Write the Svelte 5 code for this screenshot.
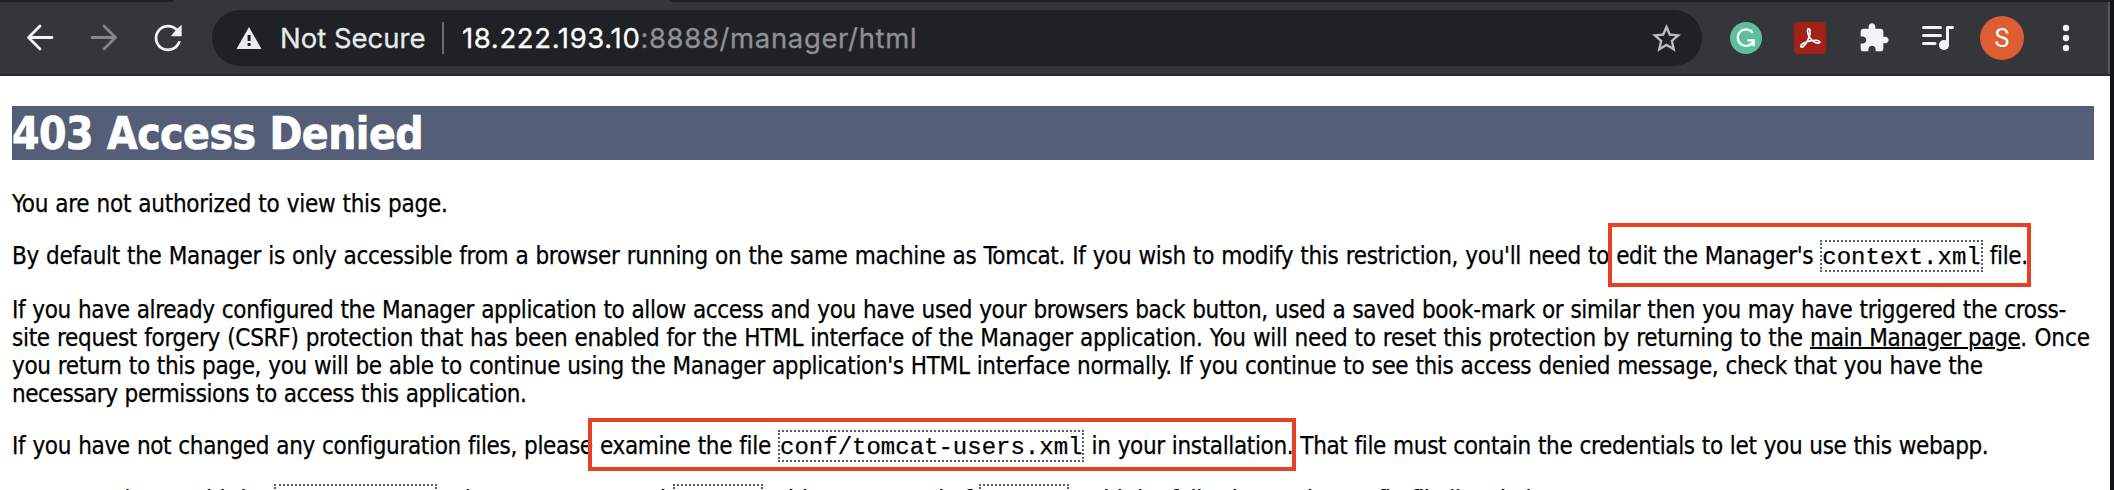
<script>
  // Each line is a list of runs; `t` is the kind of run, `ls` its tracking in px.
  const paragraphs = [
    { lines: [[{ s: 'You are not authorized to view this page.', ls: -0.265 }]] },
    {
      tall: true,
      lines: [[
        { s: "By default the Manager is only accessible from a browser running on the same machine as Tomcat. If you wish to modify this restriction, you'll need to ", ls: -0.314 },
        { s: "edit the Manager's ", ls: -0.37 },
        { s: 'context.xml', t: 'code' },
        { s: ' file.', ls: -0.35 }
      ]]
    },
    {
      lines: [
        [{ s: 'If you have already configured the Manager application to allow access and you have used your browsers back button, used a saved book-mark or similar then you may have triggered the cross-', ls: -0.358 }],
        [
          { s: 'site request forgery (CSRF) protection that has been enabled for the HTML interface of the Manager application. You will need to reset this protection by returning to the ', ls: -0.29 },
          { s: 'main Manager page', t: 'link', ls: -0.42 },
          { s: '. Once', ls: -0.1 }
        ],
        [{ s: "you return to this page, you will be able to continue using the Manager application's HTML interface normally. If you continue to see this access denied message, check that you have the", ls: -0.34 }],
        [{ s: 'necessary permissions to access this application.', ls: -0.435 }]
      ]
    },
    {
      tall: true,
      lines: [[
        { s: 'If you have not changed any configuration files, please ', ls: -0.34 },
        { s: 'examine the file ', ls: -0.32 },
        { s: 'conf/tomcat-users.xml', t: 'code' },
        { s: ' in your installation. ', ls: -0.36 },
        { s: 'That file must contain the credentials to let you use this webapp.', ls: -0.355 }
      ]]
    },
    {
      lines: [[
        { s: 'For example, to add the ', ls: -0.26 },
        { s: 'manager-gui', t: 'code' },
        { s: ' role to a user named ', ls: -0.29 },
        { s: 'tomcat', t: 'code' },
        { s: ' with a password of ', ls: -0.2 },
        { s: 's3cret', t: 'code' },
        { s: ', add the following to the config file listed above.', ls: -0.4 }
      ]]
    }
  ];
</script>

<div class="window">
  <div class="view">
    <header>
      <div class="tabs"><i class="left"></i><i class="right"></i></div>
      <nav class="toolbar">
        <div class="nav">
          <svg viewBox="0 0 40 40"><path d="M32 19.5H9M20 8 8.500 19.500 20 31" fill="none" stroke="#f1f3f4" stroke-width="2.800" stroke-linecap="round" stroke-linejoin="round" /></svg>
          <svg viewBox="0 0 40 40"><path d="M8 19.500H31M20 8 31.500 19.500 20 31" fill="none" stroke="#86878a" stroke-width="2.800" stroke-linecap="round" stroke-linejoin="round" /></svg>
          <svg viewBox="0 0 24 24"><path fill="#f1f3f4" d="M17.65 6.35C16.2 4.9 14.21 4 12 4c-4.42 0-7.99 3.58-7.99 8s3.57 8 7.99 8c3.73 0 6.84-2.55 7.730-6h-1.700c-.9 2.520-3.260 4.350-6.030 4.350-3.500 0-6.350-2.850-6.350-6.350s2.850-6.350 6.350-6.350c1.760 0 3.330.73 4.470 1.890L13.700 11H20.200V4l-2.550 2.350z" /></svg>
        </div>
        <div class="omnibox">
          <svg class="warn" viewBox="0 0 26 22"><path fill="#e8eaed" fill-rule="evenodd" d="M13 0 25.500 22H.5zM11.600 8v6h3V8zm0 8v3h3v-3z" /></svg>
          <span class="status">Not Secure</span>
          <span class="rule"></span>
          <span class="url"><b>18.222.193.10</b>:8888/manager/html</span>
          <svg class="star" viewBox="0 0 24 24"><path fill="#bdbdbf" d="M22 9.240l-7.190-.62L12 2 9.190 8.630 2 9.240l5.460 4.730L5.820 21 12 17.270 18.180 21l-1.630-7.030L22 9.240zM12 15.400l-3.760 2.270 1-4.280-3.320-2.880 4.380-.38L12 6.100l1.710 4.040 4.380.38-3.320 2.880 1 4.280L12 15.400z" /></svg>
        </div>
        <div class="extensions">
          <svg viewBox="0 0 32 32">
            <circle cx="16" cy="16" r="16" fill="#5fbf9d" />
            <path d="M22.800 10.800A8.300 8.300 0 1 0 23.600 19M17.300 18.300H23.700V23.800" fill="none" stroke="#fff" stroke-width="2.200" />
            <path d="M19.500 22.500l4.900 2V19z" fill="#fff" />
          </svg>
          <svg viewBox="0 0 32 32">
            <rect width="32" height="32" rx="4" fill="#a12317" />
            <path d="M14.500 6.900c1.700-.2 2.300 2.200 1 6.700-1.200 4.400-4.100 9.100-6.600 11.200-1.800 1.100-3-.5-1.600-2 2.500-2.500 9.900-4.800 15.200-4.400 4 .3 4 2.700 1.800 2.800-3.200.1-7-3.200-8.900-6.300-1.900-3.200-2.500-7.800-.9-8z" fill="none" stroke="#fff" stroke-width="1.700" stroke-linejoin="round" />
          </svg>
          <svg class="puzzle" viewBox="0 0 24 24"><path fill="#f1f3f4" d="M20.500 11H19V7c0-1.100-.9-2-2-2h-4V3.500C13 2.120 11.880 1 10.500 1S8 2.120 8 3.500V5H4c-1.100 0-1.990.9-1.990 2v3.800H3.500c1.490 0 2.700 1.210 2.700 2.700s-1.210 2.700-2.700 2.700H2V20c0 1.100.9 2 2 2h3.800v-1.500c0-1.490 1.210-2.700 2.700-2.700 1.490 0 2.700 1.210 2.700 2.700V22H17c1.100 0 2-.9 2-2v-4h1.500c1.380 0 2.500-1.120 2.500-2.500S21.880 11 20.500 11z" /></svg>
          <svg viewBox="0 0 32 32">
            <path d="M1.500 5.500h17M1.500 13.500h17M1.500 21.500h11.500" stroke="#f1f3f4" stroke-width="3" stroke-linecap="round" />
            <path d="M25.500 22.500v-17h5" fill="none" stroke="#f1f3f4" stroke-width="3" stroke-linecap="round" stroke-linejoin="round" />
            <circle cx="22" cy="23" r="5.100" fill="#f1f3f4" />
          </svg>
        </div>
        <div class="avatar">S</div>
        <svg class="menu" viewBox="0 0 32 32" fill="#f1f3f4"><circle cx="16" cy="6" r="3.200" /><circle cx="16" cy="16" r="3.200" /><circle cx="16" cy="26" r="3.200" /></svg>
      </nav>
    </header>

    <main>
      <h1>403 Access Denied</h1>
      {#each paragraphs as p}
        <p class:tall={p.tall}>
          {#each p.lines as line}
            <span class="line">{#each line as r}{#if r.t === 'code'}<code>{r.s}</code>{:else if r.t === 'link'}<a href="#manager" style="letter-spacing: {r.ls}px">{r.s}</a>{:else}<span style="letter-spacing: {r.ls}px">{r.s}</span>{/if}{/each}</span>
          {/each}
        </p>
      {/each}
    </main>
  </div>
  <div class="mark first"></div>
  <div class="mark second"></div>
</div>

<style>
  :global(body) { margin: 0; background: #111315; }
  .window { position: relative; width: 2114px; height: 490px; overflow: hidden; background: #111315; }
  .view { width: 2110px; height: 490px; overflow: hidden; background: #fff; }
  header { height: 76px; box-sizing: border-box; background: #35363a; border-bottom: 2px solid #28272a; box-shadow: inset -2px 0 #55565a; }
  .tabs { display: flex; justify-content: space-between; height: 2px; }
  .tabs i { background: #202124; }
  .tabs .left { width: 174px; border-bottom-right-radius: 6px 2px; }
  .tabs .right { width: 1440px; border-bottom-left-radius: 6px 2px; }
  .toolbar { display: flex; align-items: center; height: 72px; padding-left: 20px; }
  svg { display: block; flex: none; }
  .nav { display: flex; gap: 24px; margin-right: 24px; }
  .nav svg { width: 40px; height: 40px; }
  .omnibox { display: flex; align-items: center; box-sizing: border-box; width: 1490px; height: 56px; padding: 0 18px 0 24px; border-radius: 28px; background: #202124; font: 27.500px/56px Inter, sans-serif; -webkit-text-stroke: 0.300px; }
  .warn { width: 26px; height: 22px; margin-right: 18px; }
  .status { width: 162px; color: #e8eaed; letter-spacing: 0; white-space: nowrap; }
  .rule { width: 2px; height: 32px; margin-right: 18px; background: #6a6b6e; }
  .url { flex: 1; color: #8f9093; letter-spacing: 0.640px; white-space: nowrap; }
  .url b { color: #fff; font-weight: 400; }
  .star { width: 35px; height: 35px; }
  .extensions { display: flex; gap: 32px; margin: 0 26px 0 28px; }
  .extensions svg { width: 32px; height: 32px; overflow: visible; }
  .avatar { width: 44px; height: 44px; margin-right: 26px; border-radius: 50%; background: #df5d33; color: #fff; font: 25px/45px Roboto, sans-serif; text-align: center; }
  .menu { width: 32px; height: 32px; }

  main { padding: 30px 16px 0 12px; font: 24px/28px "DejaVu Sans Condensed", Tahoma, sans-serif; color: #000; word-spacing: 0.600px; -webkit-text-stroke: 0.250px; }
  h1 { height: 54px; margin: 0 0 30px; background: #545e76; color: #fff; font-size: 44px; line-height: 56px; font-weight: 700; letter-spacing: -0.500px; -webkit-text-stroke: 0.700px; }
  p { margin: 0 0 24px; }
  p.tall { padding-bottom: 2px; }
  .line { display: block; height: 28px; white-space: pre; }
  a { color: #000; text-decoration: underline; text-decoration-thickness: 2px; }
  code { display: inline-block; box-sizing: border-box; height: 32px; margin: -4px 0; border: 2px dotted #545e76; font: 24px/31px "Liberation Mono", monospace; word-spacing: 0; }

  .mark { position: absolute; box-sizing: border-box; border: 4px solid #e84025; }
  .first { left: 1608px; top: 223px; width: 423px; height: 64px; }
  .second { left: 588px; top: 418px; width: 708px; height: 53px; }
</style>
